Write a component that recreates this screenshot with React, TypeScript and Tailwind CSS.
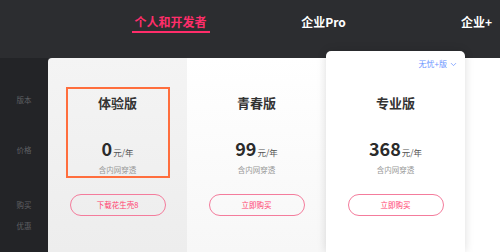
import { ChevronDown } from 'lucide-react'

const font = { fontFamily: '"Noto Sans CJK SC", "Noto Sans", sans-serif' }

type Plan = {
  name: string
  price: string
  button: string
  highlight?: boolean
  featured?: boolean
  bg: string
}

const plans: Plan[] = [
  { name: '体验版', price: '0', button: '下载花生壳8', highlight: true, bg: 'bg-gradient-to-b from-[#f4f4f4] to-[#ededed] rounded-tl-[4px]' },
  { name: '青春版', price: '99', button: '立即购买', bg: 'bg-gradient-to-b from-white to-[#f7f7f7]' },
  { name: '专业版', price: '368', button: '立即购买', featured: true, bg: 'bg-white' },
]

function PlanCard({ plan }: { plan: Plan }) {
  return (
    <div
      className={`relative w-[139px] shrink-0 flex flex-col items-center ${plan.bg} ${
        plan.featured
          ? '-mt-[7px] h-[201px] pt-[36px] rounded-t-[5px] shadow-[0_0_10px_rgba(0,0,0,0.14)] z-10'
          : 'h-[194px] pt-[29px]'
      }`}
    >
      {plan.featured && (
        <div className="absolute top-[8px] right-[7px] flex items-center gap-[2px] text-[8px] leading-[10px] text-[#6a93ff]">
          无忧+版
          <ChevronDown className="w-[9px] h-[9px]" strokeWidth={2} />
        </div>
      )}
      <div
        className={`w-[104px] h-[91px] flex flex-col items-center border-2 pt-[6px] ${
          plan.highlight ? 'border-[#ff6e3d]' : 'border-transparent'
        }`}
      >
        <div className="text-[13px] leading-[16px] font-bold text-[#333]">{plan.name}</div>
        <div className="mt-[27px] flex items-baseline leading-[20px]">
          <span className="text-[18px] font-bold text-[#2b2b2b]">{plan.price}</span>
          <span className="text-[8.5px] text-[#555] ml-[1px]">元/年</span>
        </div>
        <div className="mt-[3px] text-[7.5px] leading-[10px] text-[#999]">含内网穿透</div>
      </div>
      <button className="mt-[16px] w-[96px] h-[22px] rounded-full border border-[#f47c9c] text-[7.5px] text-[#ff3d6e] bg-transparent">
        {plan.button}
      </button>
    </div>
  )
}

export default function App() {
  return (
    <div className="w-[500px] h-[252px] overflow-hidden bg-[#2c2d30]" style={font}>
      {/* tabs */}
      <div className="h-[58px] flex pl-[94px] pt-[14px]">
        <div className="w-[153px] shrink-0 flex justify-center">
          <div className="flex flex-col items-center">
            <div className="text-[12px] leading-[16px] font-bold text-[#ff2d6a]">个人和开发者</div>
            <div className="mt-[1px] w-[78px] h-[2px] bg-[#ff2d6a]" />
          </div>
        </div>
        <div className="w-[153px] shrink-0 text-center text-[12px] leading-[16px] font-bold text-white">企业Pro</div>
        <div className="w-[153px] shrink-0 text-center text-[12px] leading-[16px] font-bold text-white">企业+</div>
      </div>

      <div className="flex items-start">
        {/* side labels */}
        <div className="w-[48px] h-[194px] shrink-0 bg-[#232427] flex flex-col items-center pt-[37px] text-[7.5px] leading-[10px] text-[#5f6064]">
          <div>版本</div>
          <div className="mt-[40px]">价格</div>
          <div className="mt-[45px]">购买</div>
          <div className="mt-[11px]">优惠</div>
        </div>

        {plans.map(p => (
          <PlanCard key={p.name} plan={p} />
        ))}

        <div className="w-[40px] h-[194px] shrink-0 bg-white" />
      </div>
    </div>
  )
}
